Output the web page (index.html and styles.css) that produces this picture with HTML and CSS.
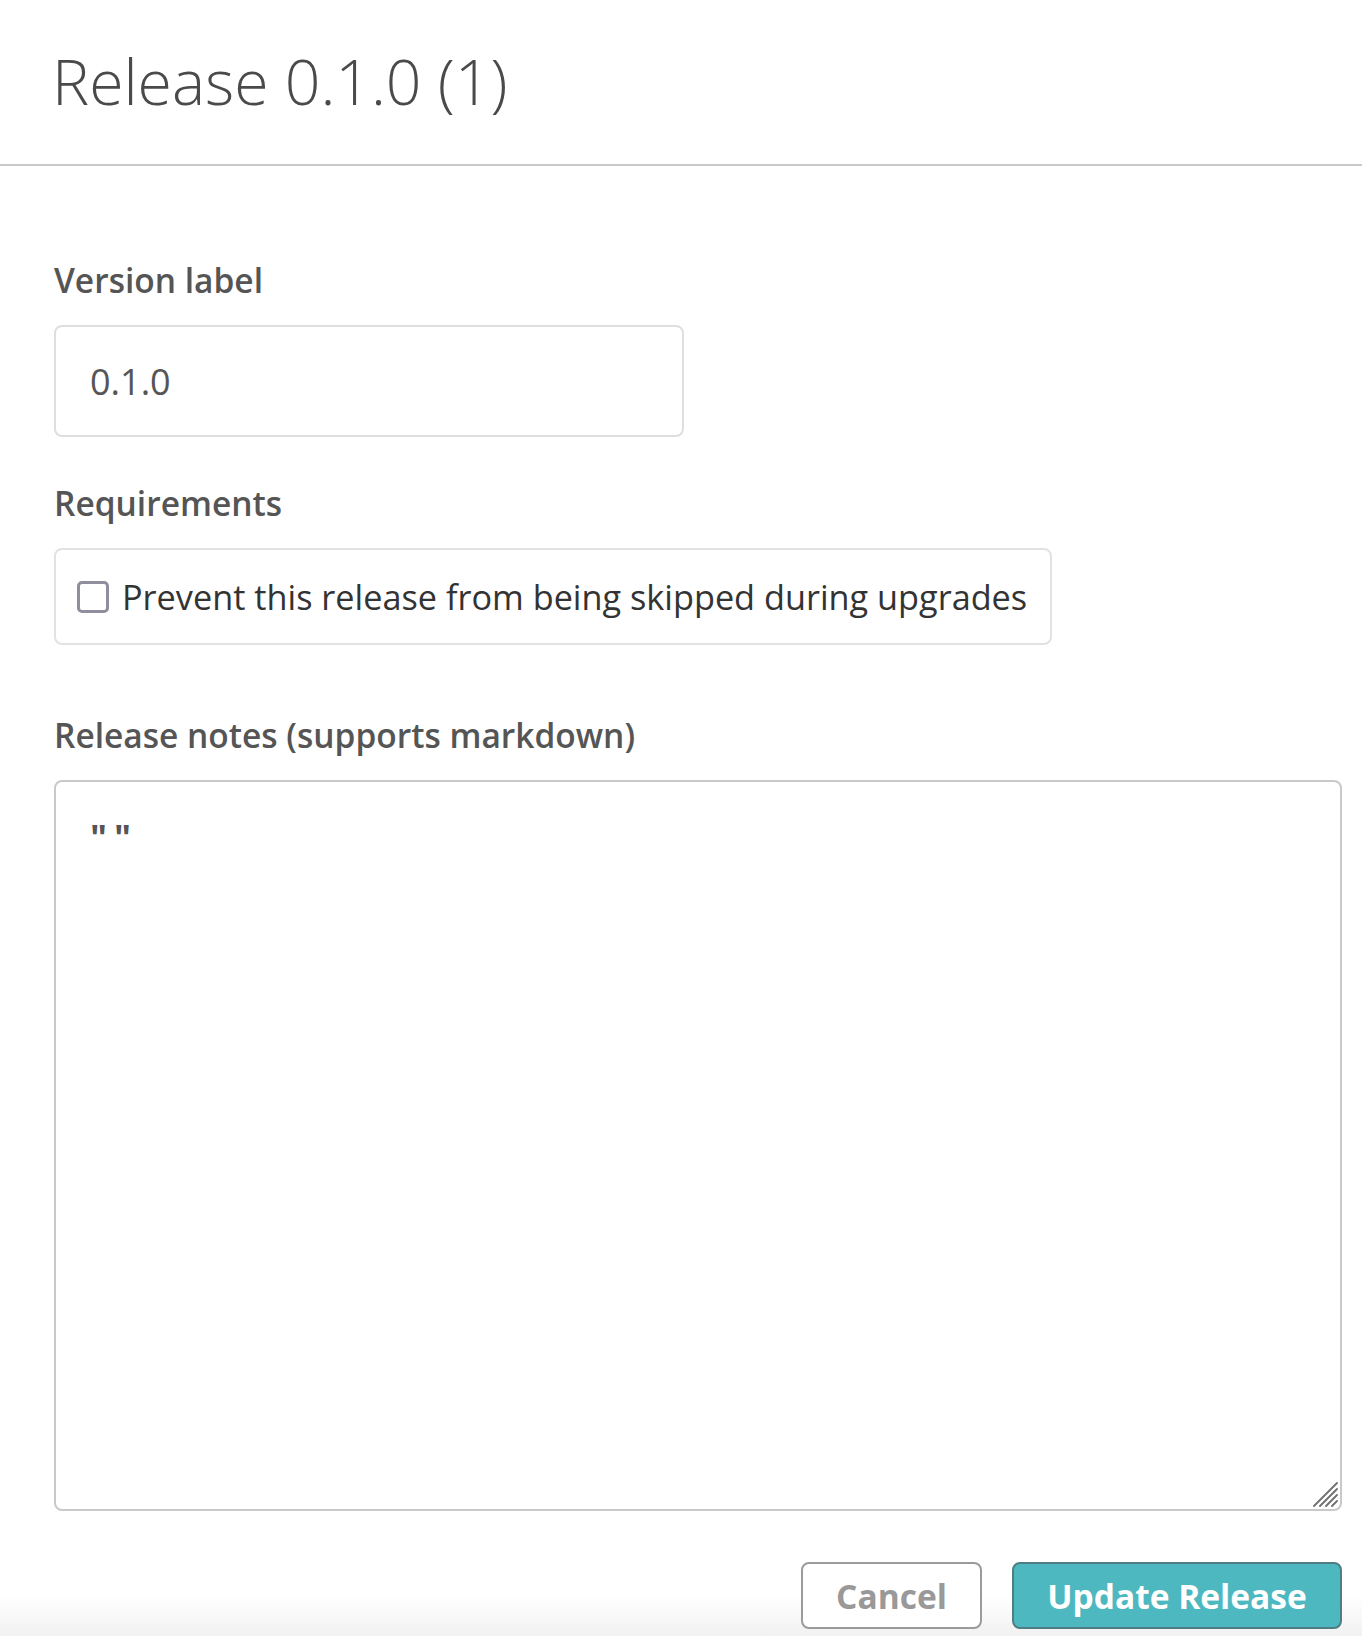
FILE: index.html
```html
<!DOCTYPE html>
<html lang="en">
<head>
<meta charset="utf-8">
<title>Release 0.1.0 (1)</title>
<link rel="stylesheet" href="styles.css">
</head>
<body>
<div class="page">
  <header class="header">
    <h1 class="title">Release 0.1.0 (1)</h1>
  </header>
  <form class="form">
    <div class="field">
      <label class="label" for="version">Version label</label>
      <input class="input" id="version" type="text" value="0.1.0">
    </div>
    <div class="field field-req">
      <div class="label">Requirements</div>
      <label class="check-box">
        <input class="cb" type="checkbox">
        <span>Prevent this release from being skipped during upgrades</span>
      </label>
    </div>
    <div class="field field-notes">
      <label class="label" for="notes">Release notes (supports markdown)</label>
      <div class="notes-wrap">
        <textarea class="notes" id="notes">""</textarea>
        <svg class="grip" width="26" height="26" viewBox="0 0 26 26" aria-hidden="true">
          <path d="M2 25 L25 2 M8 25 L25 8 M14 25 L25 14 M20 25 L25 20" stroke="#6f6f6f" stroke-width="1.8" fill="none" stroke-linecap="round"/>
        </svg>
      </div>
    </div>
    <div class="actions">
      <button type="button" class="btn btn-cancel">Cancel</button>
      <button type="button" class="btn btn-primary">Update Release</button>
    </div>
  </form>
</div>
</body>
</html>
```
FILE: styles.css
```css
html, body {
  margin: 0;
  padding: 0;
}
body {
  font-family: "Open Sans", "Liberation Sans", sans-serif;
  background: linear-gradient(to bottom, #ffffff calc(100% - 40px), #f1f1f1 100%);
  min-height: 100vh;
}
.header {
  padding: 40px 54px 0 52px;
  height: 124px;
  border-bottom: 2px solid #c9c9cc;
}
.title {
  margin: 0;
  font-size: 62.5px;
  font-weight: 300;
  line-height: 82px;
  color: #4a4a4a;
}
.form {
  padding: 92px 20px 0 54px;
}
.field {
  display: flex;
  flex-direction: column;
  align-items: flex-start;
}
.label {
  display: block;
  font-size: 33.5px;
  font-weight: 600;
  line-height: 44px;
  color: #555555;
  margin-bottom: 23px;
}
.input {
  box-sizing: border-box;
  width: 630px;
  height: 112px;
  border: 2px solid #dedede;
  border-radius: 8px;
  padding: 0 34px;
  font-family: "Open Sans", sans-serif;
  font-size: 36px;
  color: #555555;
  outline: none;
  background: #fff;
}
.field-req {
  margin-top: 44px;
}
.check-box {
  box-sizing: border-box;
  display: flex;
  align-items: center;
  gap: 13px;
  height: 97px;
  border: 2px solid #e2e2e2;
  border-radius: 8px;
  padding: 0 23px 0 21px;
  font-size: 34.25px;
  color: #333333;
  background: #fff;
}
.cb {
  appearance: none;
  -webkit-appearance: none;
  margin: 0;
  width: 32px;
  height: 32px;
  box-sizing: border-box;
  border: 3px solid #8e8e9e;
  border-radius: 5px;
  background: #fff;
  flex: none;
}
.field-notes {
  margin-top: 68px;
}
.notes-wrap {
  position: relative;
  width: 100%;
}
.notes {
  box-sizing: border-box;
  display: block;
  width: 100%;
  height: 731px;
  border: 2px solid #c9c9cc;
  border-radius: 8px;
  padding: 34px 34px;
  font-family: "Open Sans", sans-serif;
  font-size: 36px;
  font-weight: 700;
  letter-spacing: 7px;
  line-height: 44px;
  color: #555555;
  outline: none;
  resize: none;
  background: #fff;
}
.grip {
  position: absolute;
  right: 4px;
  bottom: 4px;
}
.actions {
  display: flex;
  justify-content: flex-end;
  gap: 30px;
  margin-top: 51px;
}
.btn {
  box-sizing: border-box;
  height: 67px;
  border-radius: 8px;
  font-family: "Open Sans", sans-serif;
  font-size: 33.5px;
  font-weight: 700;
  padding: 0 20px;
  cursor: pointer;
}
.btn-cancel {
  width: 181px;
  border: 2px solid #9b9b9b;
  background: #fff;
  color: #999999;
}
.btn-primary {
  width: 330px;
  border: 2px solid #4f7d83;
  background: #4db8c0;
  color: #ffffff;
}
```
